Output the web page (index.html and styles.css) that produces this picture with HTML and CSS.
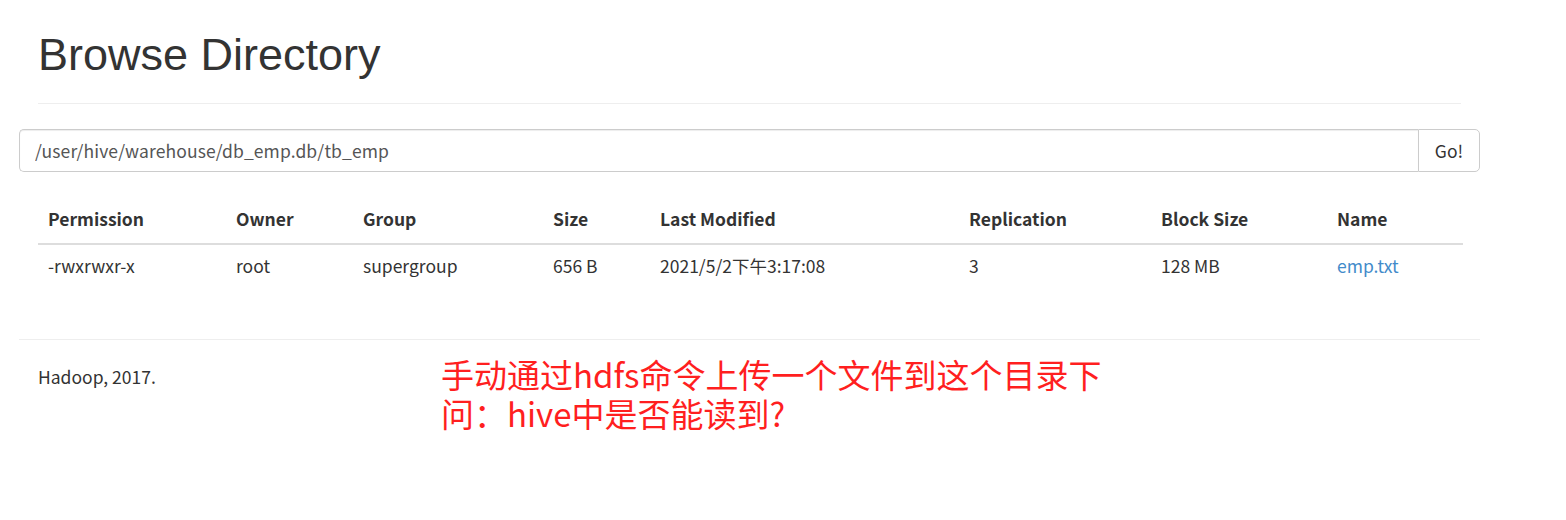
FILE: index.html
```html
<!DOCTYPE html>
<html lang="zh-CN">
<head>
    <meta charset="UTF-8">
    <title>Browsing HDFS</title>
    <link rel="stylesheet" href="styles.css">
</head>
<body>
    <div class="container">
        <div class="page-header">
            <h1>Browse Directory</h1>
        </div>

        <form class="input-group">
            <input class="path-input" type="text" value="/user/hive/warehouse/db_emp.db/tb_emp">
            <button class="go-btn" type="button">Go!</button>
        </form>

        <table class="listing">
            <thead>
                <tr>
                    <th class="c-perm">Permission</th>
                    <th class="c-owner">Owner</th>
                    <th class="c-group">Group</th>
                    <th class="c-size">Size</th>
                    <th class="c-mod">Last Modified</th>
                    <th class="c-repl">Replication</th>
                    <th class="c-block">Block Size</th>
                    <th>Name</th>
                </tr>
            </thead>
            <tbody>
                <tr>
                    <td>-rwxrwxr-x</td>
                    <td>root</td>
                    <td>supergroup</td>
                    <td>656 B</td>
                    <td>2021/5/2下午3:17:08</td>
                    <td>3</td>
                    <td>128 MB</td>
                    <td><a href="#">emp.txt</a></td>
                </tr>
            </tbody>
        </table>

        <hr class="footer-rule">
        <footer class="footer">
            <p class="copyright">Hadoop, 2017.</p>
            <!-- 批注 -->
            <div class="note">
                <div>手动通过hdfs命令上传一个文件到这个目录下</div>
                <div>问：hive中是否能读到?</div>
            </div>
        </footer>
    </div>
</body>
</html>
```

FILE: styles.css
```css
* {
    box-sizing: border-box;
}

body {
    margin: 0;
    background: #fff;
    color: #333;
    font-family: "Noto Sans CJK SC", "Liberation Sans", sans-serif;
    font-size: 17.5px;
    line-height: 1.43;
}

.container {
    width: 1461px;
    margin-left: 19px;
    padding-bottom: 40px;
}

/* Заголовок */
.page-header {
    margin: 0 19px 25px;
    padding-top: 30px;
    padding-bottom: 23px;
    border-bottom: 1px solid #eee;
}

.page-header h1 {
    margin: 0;
    font-family: "Liberation Sans", Arial, sans-serif;
    font-size: 45px;
    font-weight: 400;
    line-height: 1.1;
    color: #333;
}

/* Строка пути */
.input-group {
    display: flex;
    height: 43px;
    margin: 0 0 26px;
}

.path-input {
    flex: 1;
    height: 100%;
    padding: 0 15px;
    border: 1px solid #ccc;
    border-right: 0;
    border-radius: 5px 0 0 5px;
    font-family: "Noto Sans CJK SC", "Liberation Sans", sans-serif;
    font-size: 17.5px;
    letter-spacing: 0.1px;
    color: #555;
    box-shadow: inset 0 1px 1px rgba(0, 0, 0, 0.075);
    outline: none;
}

.go-btn {
    width: 62px;
    height: 100%;
    border: 1px solid #ccc;
    border-radius: 0 5px 5px 0;
    background: #fff;
    font-family: "Noto Sans CJK SC", "Liberation Sans", sans-serif;
    font-size: 17.5px;
    color: #333;
}

/* Таблица */
.listing {
    width: 1425px;
    margin: 0 19px;
    border-collapse: collapse;
    table-layout: fixed;
}

.listing th,
.listing td {
    padding: 8px 10px 12px;
    text-align: left;
    vertical-align: top;
    line-height: 25px;
}

.listing th {
    font-weight: 700;
    border-bottom: 2px solid #ddd;
}

.listing td {
    border-top: 1px solid #fff;
}

.c-perm { width: 188px; }
.c-owner { width: 127px; }
.c-group { width: 190px; }
.c-size { width: 107px; }
.c-mod { width: 309px; }
.c-repl { width: 192px; }
.c-block { width: 176px; }

.listing a {
    color: #428bca;
    text-decoration: none;
}

/* Подвал */
.footer-rule {
    margin: 49px 0 0;
    border: 0;
    border-top: 1px solid #eee;
}

.footer {
    display: flex;
    align-items: flex-start;
    padding: 0 19px;
}

.copyright {
    width: 403px;
    margin: 24px 0 0;
}

.note {
    margin-top: 15px;
    color: #ff1f1f;
    font-size: 33px;
    line-height: 39px;
    white-space: nowrap;
}
```
